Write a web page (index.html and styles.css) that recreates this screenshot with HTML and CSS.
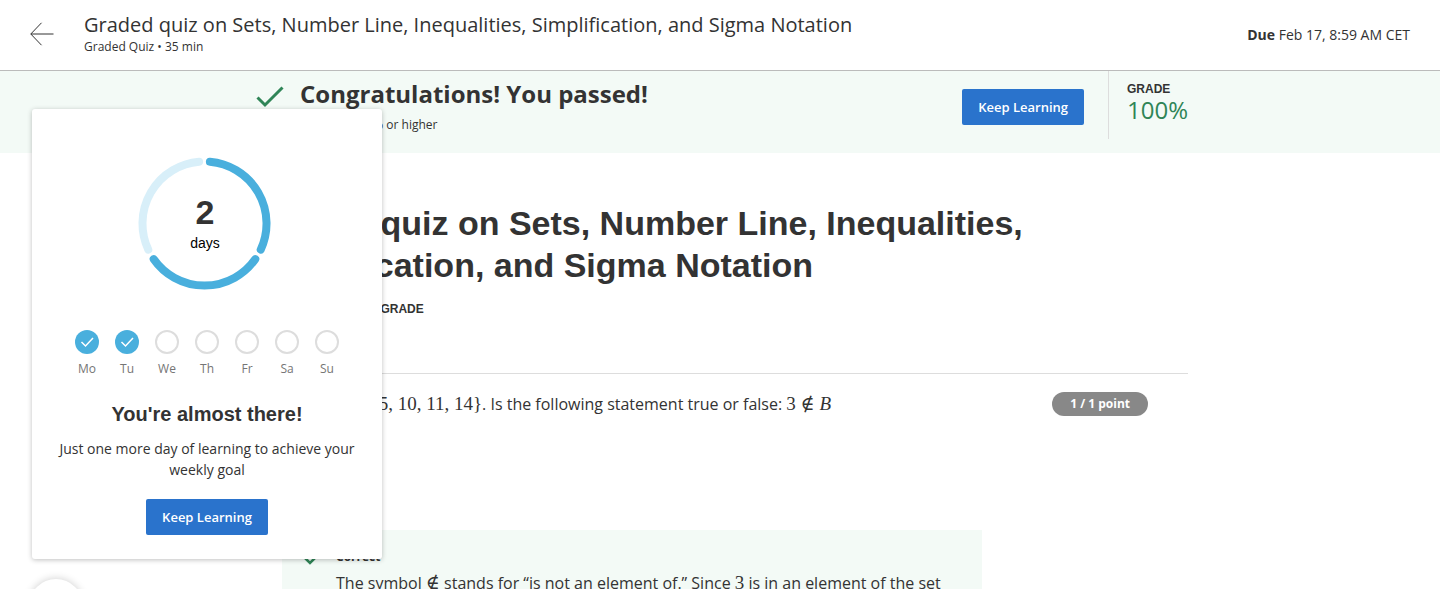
FILE: index.html
```
<!DOCTYPE html>
<html lang="en">
<head>
<meta charset="utf-8">
<meta name="viewport" content="width=device-width, initial-scale=1">
<title>Graded quiz</title>
<link rel="stylesheet" href="styles.css">
</head>
<body>
<header class="topbar">
  <button class="back" type="button" aria-label="Back">
    <svg width="24" height="24" viewBox="0 0 24 24" fill="none" stroke="#333" stroke-width="1"><path d="M11.500 .8 .8 12l10.700 11.200M.8 12H23.500"/></svg>
  </button>
  <div class="topbar-text">
    <div class="topbar-title">Graded quiz on Sets, Number Line, Inequalities, Simplification, and Sigma Notation</div>
    <div class="topbar-sub">Graded Quiz • 35 min</div>
  </div>
  <div class="due"><strong>Due</strong> Feb 17, 8:59 AM CET</div>
</header>

<section class="banner">
  <div class="banner-inner">
    <svg class="banner-check" width="36" height="36" viewBox="0 0 36 36" fill="none" stroke="#2f8557" stroke-width="3"><path d="M5.500 19.500 13 27 30.500 9.500"/></svg>
    <div class="banner-text">
      <h2 class="banner-title">Congratulations! You passed!</h2>
      <p class="pass"><span class="caps">TO PASS</span><span>80% or higher</span></p>
    </div>
    <button class="btn" type="button">Keep Learning</button>
    <div class="grade"><div class="caps">GRADE</div><div class="grade-value">100%</div></div>
  </div>
</section>

<main class="content">
  <h1 class="title">Graded quiz on Sets, Number Line, Inequalities, Simplification, and Sigma Notation</h1>
  <div class="caps">LATEST SUBMISSION GRADE</div>
  <div class="score">100%</div>
  <section class="question">
    <div class="number">1.</div>
    <div class="prompt">Let <span class="math"><i>B</i>&ensp;=&ensp;{3, 5, 10, 11, 14}</span>. Is the following statement true or false: <span class="math">3 ∉ <i>B</i></span></div>
    <div class="pill">1 / 1 point</div>
    <div class="feedback">
      <svg class="feedback-check" width="24" height="24" viewBox="0 0 24 24" fill="none" stroke="#2f8557" stroke-width="2.500"><path d="M4 9 10 15 22 3"/></svg>
      <div>
        <div class="correct">Correct</div>
        <p class="explain">The symbol <span class="math">∉</span> stands for “is not an element of.” Since <span class="math">3</span> is in an element of the set</p>
      </div>
    </div>
  </section>
</main>

<aside class="goal">
  <svg class="ring" width="146" height="140" viewBox="0 0 146 140" fill="none" stroke-width="8" stroke-linecap="round">
    <path stroke="#49afdd" d="M75.900 8.700A62 62 0 0 1 126.700 96.700"/>
    <path stroke="#49afdd" d="M121.300 106.100A62 62 0 0 1 19.700 106.100"/>
    <path stroke="#d8eff9" d="M14.300 96.700A62 62 0 0 1 65.100 8.700"/>
    <text class="ring-num" x="71" y="71">2</text>
    <text class="ring-unit" x="71" y="95">days</text>
  </svg>
  <ol class="week">
    <li class="day"><span class="dot done"><svg width="24" height="24" viewBox="0 0 24 24" fill="none" stroke="#fff" stroke-width="1.500"><path d="M6.500 12 10.500 16 18 8"/></svg></span>Mo</li>
    <li class="day"><span class="dot done"><svg width="24" height="24" viewBox="0 0 24 24" fill="none" stroke="#fff" stroke-width="1.500"><path d="M6.500 12 10.500 16 18 8"/></svg></span>Tu</li>
    <li class="day"><span class="dot"></span>We</li>
    <li class="day"><span class="dot"></span>Th</li>
    <li class="day"><span class="dot"></span>Fr</li>
    <li class="day"><span class="dot"></span>Sa</li>
    <li class="day"><span class="dot"></span>Su</li>
  </ol>
  <h3 class="goal-title">You're almost there!</h3>
  <p class="goal-text">Just one more day of learning to achieve your weekly goal</p>
  <button class="btn" type="button">Keep Learning</button>
</aside>
<div class="bubble"></div>
</body>
</html>
```
FILE: styles.css
```
* { box-sizing: border-box; }
body {
  margin: 0;
  height: 100vh;
  overflow: hidden;
  position: relative;
  background: #fff;
  color: #333;
  font: 14px/21px "Open Sans", sans-serif;
}
h1, h2, h3, p, ol { margin: 0; padding: 0; }

.topbar {
  display: flex;
  align-items: center;
  height: 71px;
  padding: 0 30px 2px;
  border-bottom: 1px solid #bbb;
}
.back { display: flex; padding: 0; margin-right: 30px; border: 0; background: none; }
.topbar-text { flex: 1; }
.topbar-title { font-size: 20px; line-height: 26px; }
.topbar-sub { font-size: 12px; line-height: 18px; }

.banner { background: #f3faf6; }
.banner-inner {
  display: flex;
  align-items: flex-start;
  max-width: 936px;
  height: 82px;
  margin: 0 auto;
}
.banner-check { margin: 7px 12px 0 0; }
.banner-text { flex: 1; }
.banner-title { margin-top: 8px; font-size: 24px; line-height: 30px; font-weight: 700; }
.pass { display: flex; gap: 8px; margin-top: 7px; font-size: 12px; line-height: 18px; }
.caps { font: bold 12px/18px "Liberation Sans", Arial, sans-serif; }
.btn {
  height: 36px;
  padding: 0 16px;
  border: 0;
  border-radius: 2px;
  background: #2a73cc;
  color: #fff;
  font: 600 13px/18px "Open Sans", sans-serif;
}
.banner .btn { margin: 18px 24px 0 0; }
.grade { height: 68px; padding: 9px 0 0 18px; border-left: 1px solid #ddd; }
.grade-value { color: #2f8557; font-size: 24px; line-height: 24px; }

.content { max-width: 936px; margin: 0 auto; padding-top: 49px; }
.title {
  margin-bottom: 14px;
  font: bold 34px/42px "Liberation Sans", Arial, sans-serif;
}
.score { height: 55px; font-size: 24px; line-height: 30px; color: #2f8557; }
.question {
  display: grid;
  grid-template-columns: 30px 1fr auto;
  padding: 18px 40px 0 0;
  border-top: 1px solid #ddd;
  font-size: 16px;
  line-height: 24px;
}
.math {
  font-family: "Liberation Serif", "DejaVu Serif", serif;
  font-size: 19px;
  line-height: 1;
}
.pill {
  align-self: start;
  padding: 0 18px;
  border-radius: 12px;
  background: #888;
  color: #fff;
  font-size: 12px;
  font-weight: 700;
}
.feedback {
  grid-column: 2;
  display: flex;
  gap: 12px;
  width: 700px;
  margin-top: 114px;
  padding: 18px;
  background: #f3faf6;
}
.feedback-check { flex: none; }
.correct { font-size: 12px; line-height: 18px; font-weight: 700; }
.explain { margin-top: 5px; }

.goal {
  position: absolute;
  top: 109px;
  left: 32px;
  width: 350px;
  padding: 44px 24px 24px;
  border-radius: 3px;
  background: #fff;
  box-shadow: 0 1px 5px rgba(0, 0, 0, .25);
  text-align: center;
}
.ring { display: block; margin: 0 auto 37px; }
.ring-num { fill: #333; font: bold 34px "Liberation Sans", Arial, sans-serif; text-anchor: middle; }
.ring-unit { fill: #000; font: 14px "Liberation Sans", Arial, sans-serif; text-anchor: middle; }
.week { display: flex; justify-content: center; list-style: none; }
.day { width: 40px; color: #757575; font-size: 12px; line-height: 18px; }
.dot {
  display: block;
  width: 24px;
  height: 24px;
  margin: 0 auto 6px;
  border: 2px solid #ddd;
  border-radius: 50%;
}
.done { border: 0; background: #49afdd; }
.done svg { display: block; }
.goal-title { margin: 24px 0 12px; font: bold 20px/24px "Liberation Sans", Arial, sans-serif; }
.goal-text { margin-bottom: 19px; }

.bubble {
  position: absolute;
  top: 579px;
  left: 29px;
  width: 54px;
  height: 54px;
  border-radius: 50%;
  background: #fff;
  box-shadow: 0 0 9px rgba(0, 0, 0, .2);
}
```
